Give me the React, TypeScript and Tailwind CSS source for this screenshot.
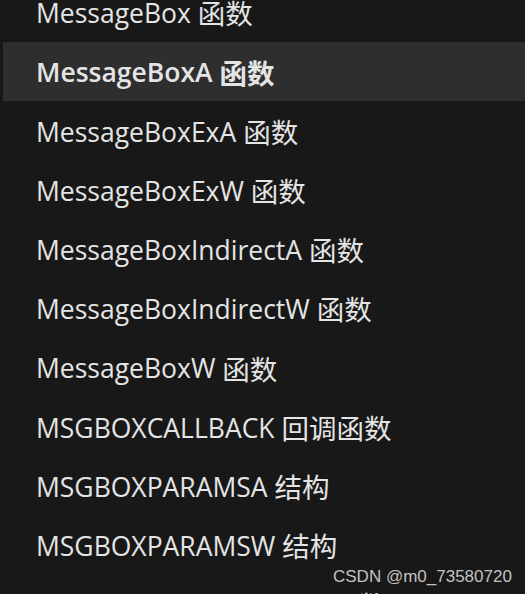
const items = [
  { name: "MessageBox", kind: "函数" },
  { name: "MessageBoxA", kind: "函数", active: true },
  { name: "MessageBoxExA", kind: "函数" },
  { name: "MessageBoxExW", kind: "函数" },
  { name: "MessageBoxIndirectA", kind: "函数" },
  { name: "MessageBoxIndirectW", kind: "函数" },
  { name: "MessageBoxW", kind: "函数" },
  { name: "MSGBOXCALLBACK", kind: "回调函数" },
  { name: "MSGBOXPARAMSA", kind: "结构" },
  { name: "MSGBOXPARAMSW", kind: "结构" },
  { name: "SHMessageBoxCheckW", kind: "函数" },
];

export default function App() {
  return (
    <div className="relative h-[594px] w-[525px] overflow-hidden bg-[#181818]">
      {/* TOC list, scrolled so the first entry is half out of view */}
      <ul className="-mt-[17px] font-['Open_Sans','Noto_Sans_CJK_SC',sans-serif] text-[26.5px] text-[#e4e4e4]">
        {items.map((item) => (
          <li
            key={item.name}
            className={
              item.active
                ? "ml-[3px] flex h-[59.2px] items-center bg-[#2e2e2e] pl-[33px] pt-[3px] font-semibold"
                : "ml-[3px] flex h-[59.2px] items-center pl-[33px] pt-[3px]"
            }
          >
            <span className="whitespace-pre">{item.name} </span>
            <span className="text-[27.5px]">{item.kind}</span>
          </li>
        ))}
      </ul>

      {/* watermark */}
      <div className="absolute left-[333px] top-[564px] font-['Liberation_Sans',Arial,sans-serif] text-[17px] text-[#c2c2c2]">
        CSDN @m0_73580720
      </div>
    </div>
  );
}
